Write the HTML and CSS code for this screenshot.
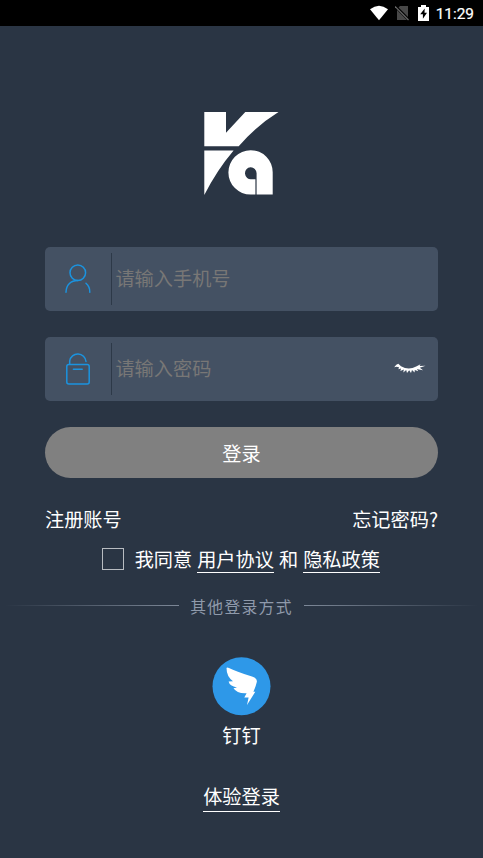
FILE: index.html
```html
<!DOCTYPE html>
<html lang="zh-CN">
<head>
<meta charset="utf-8">
<title>登录</title>
<link rel="stylesheet" href="styles.css">
</head>
<body>
<header class="status">
  <svg class="wifi" width="20" height="16" viewBox="0 0 20 16"><path d="M1 4.2Q10-2.8 19 4.2L10 15.2Z" fill="#fff"/></svg>
  <svg class="sim" width="14" height="16" viewBox="0 0 14 16"><path d="M5 1h8v14H2V4Z" fill="#484848"/><path d="M0 1l14 14" stroke="#000" stroke-width="3"/><path d="M0 1.5l13.5 13.5" stroke="#686868" stroke-width="1.2"/></svg>
  <svg class="battery" width="11" height="16" viewBox="0 0 11 16"><path d="M0 2h3V0h5v2h3v14H0Z" fill="#fff"/><path d="M6.7 3.5L2.2 9.3h2.7v4.5L9 7.8H6.5Z" fill="#000"/></svg>
  <span>11:29</span>
</header>
<main>
  <svg class="logo" width="77" height="86" viewBox="203 110 77 86" fill="#fff">
    <path d="M204.3 112H226v20.8L245.3 112H278.5Q256 126 238.7 146.2H204.3Z"/>
    <path d="M204.3 150.5H233.6Q217 170 204.3 195Z"/>
    <path d="M250.6 150.2A22 22 0 0 1 272.7 172.5V194.6H256.6V173.2A5.8 6 0 1 0 251.5 179.2H255.4V194.6H250.6A22.2 22.2 0 0 1 250.6 150.2Z"/>
  </svg>
  <div class="field">
    <svg class="icon" width="66" height="64" viewBox="0 0 66 64"><circle cx="32.8" cy="25.7" r="7.8"/><path d="M21 45.3C21.2 37.7 26 33.5 32.8 33.5M41 36.3C43.8 38.7 44.9 41.7 44.8 45.2"/></svg>
    <label>请输入手机号</label>
  </div>
  <div class="field">
    <svg class="icon" width="66" height="64" viewBox="0 0 66 64"><rect x="21.8" y="27.5" width="22.4" height="19.6" rx="2"/><path d="M24.7 27V24A8.2 8.2 0 0 1 41 24.5M28.4 32.3h8.8"/></svg>
    <label>请输入密码</label>
    <svg class="eye" width="34" height="14" viewBox="0 0 34 14"><path d="M1.2 5.2L3.3 2.8L5.3 1.8L8 4.2Q15.5 8.5 23.2 4.5L27.5 2.2L26.6 3.9L32.5 3.8L26.8 5.8L30 8.2L25.8 7.6L24 6.9L25.2 9.2L21.8 7.9L21.6 10.4L19 8.1L18 11L16.2 8.3L14 11L13.2 8L10.3 10.5L10.8 7.4L7.4 9L8 6.5L5.4 7.2L6 5.2L3.5 4.8Z" fill="#fff"/></svg>
  </div>
  <button class="login">登录</button>
  <div class="links"><span>注册账号</span><span>忘记密码?</span></div>
  <div class="agree"><i class="checkbox"></i><span>我同意</span><span class="under policy">用户协议</span><span class="and">和</span><span class="under">隐私政策</span></div>
  <div class="other"><i class="line"></i><span>其他登录方式</span><i class="line right"></i></div>
  <svg class="ding" width="59" height="60" viewBox="0 0 59 60"><circle cx="29.5" cy="30.3" r="29" fill="#2e98e8"/><path d="M14.5 12Q15 10.8 17 12Q22 14.8 40 20.6Q45.6 22.3 44.8 26Q43.8 30.5 41.4 35.8H43.3L35 49L36.6 41.4H32.3L34.6 37.2Q25 37.8 21.5 32.2L25 31.6Q17.5 30 16.6 25.6L21 25.2Q14.5 20.5 14.5 12Z" fill="#fff"/></svg>
  <div class="dingname">钉钉</div>
  <div class="trial under">体验登录</div>
</main>
</body>
</html>
```
FILE: styles.css
```css
* { box-sizing: border-box; }
body {
  margin: 0;
  height: 858px;
  overflow: hidden;
  background: #2a3544;
  color: #fff;
  font: 19.2px/28px "Noto Sans CJK SC", sans-serif;
}
svg { display: block; flex: none; }
.status {
  height: 26px;
  padding-right: 9px;
  background: #000;
  display: flex;
  align-items: center;
  justify-content: flex-end;
  font: 400 15.4px/26px Roboto, sans-serif;
}
.status span { padding-top: 1px; -webkit-text-stroke: .2px #fff; }
.sim { margin-left: 6px; }
.battery { margin: 0 7px 0 9px; }
main {
  display: flex;
  flex-direction: column;
  align-items: center;
  padding: 84px 45px 0;
}
.logo { margin-bottom: 51px; }
.field {
  width: 393px;
  height: 64px;
  margin-bottom: 26px;
  border-radius: 5px;
  background: #445163;
  display: flex;
  align-items: center;
}
.icon { fill: none; stroke: #1b93df; stroke-width: 1.5; stroke-linecap: round; }
.field label {
  flex: 1;
  height: 52px;
  padding-left: 3.4px;
  border-left: 1px solid #2d3948;
  line-height: 50px;
  color: #787776;
}
.eye { margin-right: 11px; }
.login {
  width: 393px;
  height: 51px;
  padding: 0;
  border: 0;
  border-radius: 26px;
  background: #808080;
  color: #fff;
  font: inherit;
}
.links {
  width: 393px;
  margin-top: 27px;
  display: flex;
  justify-content: space-between;
}
.agree {
  height: 28px;
  margin-top: 12px;
  display: flex;
  white-space: nowrap;
}
.checkbox {
  width: 22px;
  height: 22px;
  margin: 3px 10.5px 0 0;
  border: 1px solid #b8bcc1;
}
.under { border-bottom: 1px solid #fff; }
.agree { margin-right: 1px; }
.policy { margin-left: 5px; }
.and { margin: 0 5px; }
.other {
  width: 483px;
  margin-top: 20px;
  padding: 0 5px;
  display: flex;
  align-items: center;
  justify-content: space-between;
  line-height: 24px;
  font-size: 15.8px;
  letter-spacing: 1.3px;
  color: #8f9aab;
}
.other span { padding-top: 2px; margin-bottom: -2px; }
.line { width: 174px; height: 1px; background: linear-gradient(90deg, transparent, #7d8898); }
.line.right { background: linear-gradient(270deg, transparent, #7d8898); }
.ding { margin-top: 39px; }
.dingname { margin-top: 5px; }
.trial { margin-top: 33px; height: 30px; border-bottom-width: 1.5px; }
```
